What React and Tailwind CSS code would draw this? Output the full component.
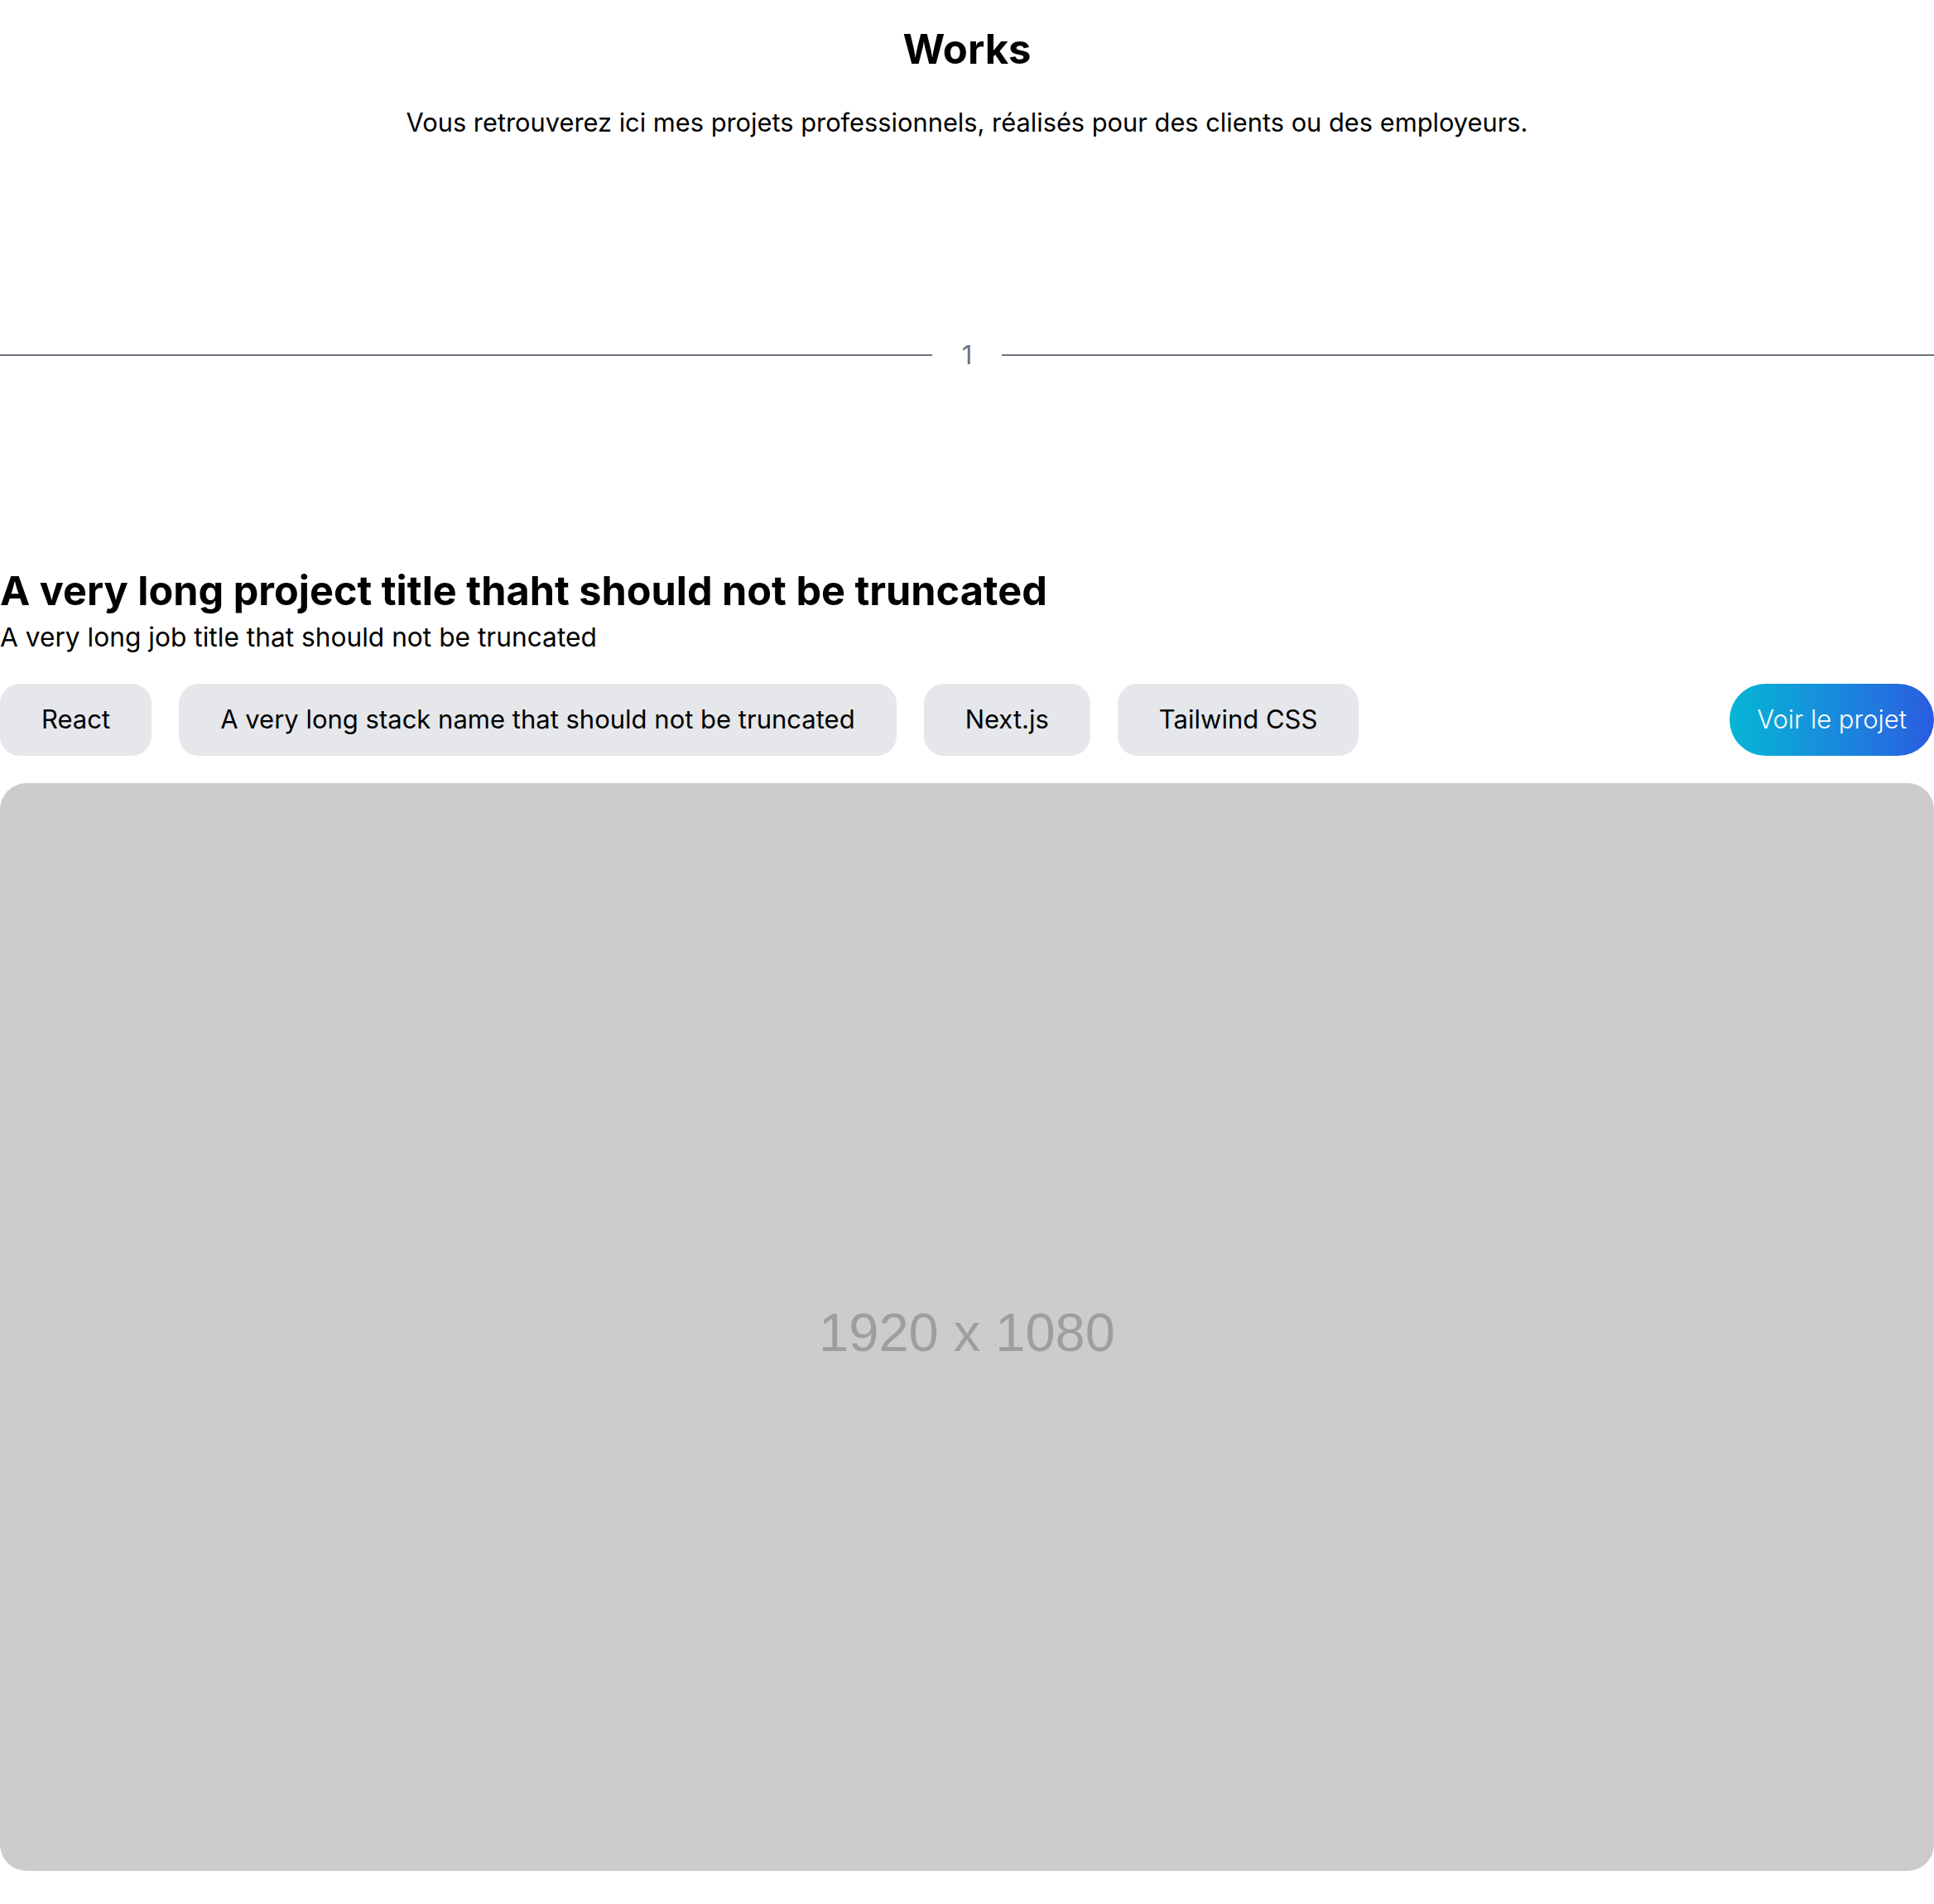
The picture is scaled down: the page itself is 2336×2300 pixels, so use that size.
import React from "react";

const stacks = ["React", "A very long stack name that should not be truncated", "Next.js", "Tailwind CSS"];

const Divider = ({ index }) => (
  <div className="flex items-center h-[45px]">
    <div className="flex-1 h-[2px] bg-[#6b7280]"></div>
    <span className="w-[84px] text-center text-[31px] leading-[45px] text-[#6b7280]">{index}</span>
    <div className="flex-1 h-[2px] bg-[#6b7280]"></div>
  </div>
);

const ProjectCard = ({ title, job, stack }) => (
  <article className="flex flex-col">
    <h2 className="text-[48.6px] leading-[58px] font-bold text-black">{title}</h2>
    <p className="mt-[4px] text-[31.7px] leading-[45px] text-black">{job}</p>
    <div className="mt-[34px] flex items-center justify-between">
      <ul className="flex items-center gap-[33px]">
        {stack.map((s) => (
          <li key={s} className="h-[87px] flex items-center px-[50px] rounded-[24px] bg-[#e5e7eb] text-[31px] text-black">
            {s}
          </li>
        ))}
      </ul>
      <a className="h-[87px] flex items-center px-[33px] rounded-full bg-gradient-to-r from-[#06b6d4] to-[#2a5be0] text-white text-[31px] font-light">
        Voir le projet
      </a>
    </div>
    <div className="mt-[33px] aspect-video w-full rounded-[32px] bg-[#cccccc] flex items-center justify-center">
      <span className="pt-[14px] text-[65px] text-[#9e9e9e] font-['Liberation_Sans',Arial,sans-serif]">1920 x 1080</span>
    </div>
  </article>
);

export default function App() {
  return (
    <main className="bg-white min-h-screen font-['Inter','Noto_Sans',sans-serif] pt-[30px] pb-[41px]">
      <header className="text-center">
        <h1 className="text-[49px] leading-[60px] font-bold text-black">Works</h1>
        <p className="mt-[35px] text-[30.8px] leading-[45px] text-black">
          Vous retrouverez ici mes projets professionnels, réalisés pour des clients ou des employeurs.
        </p>
      </header>
      <section className="mt-[236px]">
        <Divider index={1} />
        <div className="mt-[234px]">
          <ProjectCard
            title="A very long project title thaht should not be truncated"
            job="A very long job title that should not be truncated"
            stack={stacks}
          />
        </div>
      </section>
    </main>
  );
}
